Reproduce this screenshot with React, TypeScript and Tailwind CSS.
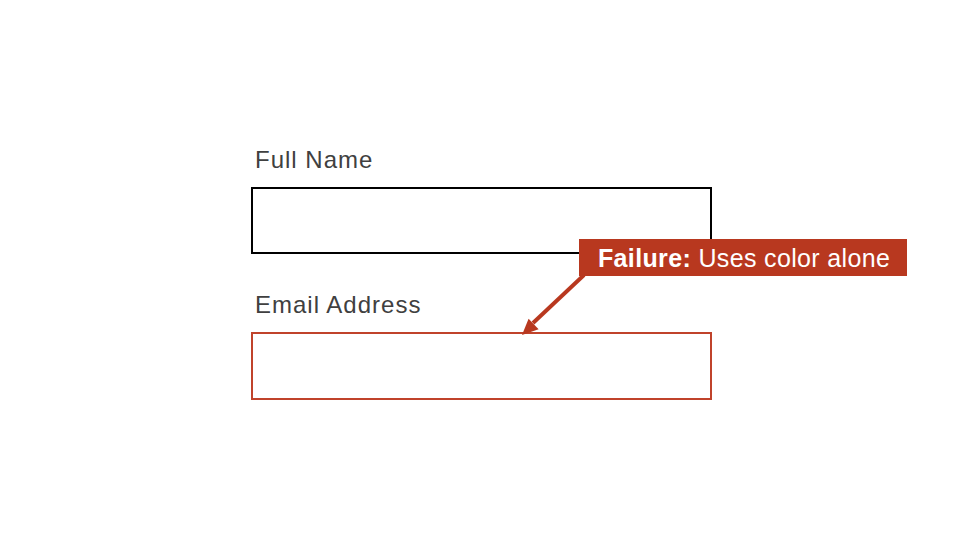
import React from "react";

export default function App() {
  const font = { fontFamily: '"Liberation Sans", Arial, sans-serif' };
  return (
    <div className="relative w-[960px] h-[540px] bg-white overflow-hidden" style={font}>
      <div className="flex flex-col pl-[251px] pt-[146px]">
        <div className="ml-[4px] text-[24px] leading-[28px] tracking-[1px] text-[#404040]">Full Name</div>
        <div className="mt-[13px] w-[461px] h-[67px] border-2 border-black bg-white" />
        <div className="mt-[37px] ml-[4px] text-[24px] leading-[28px] tracking-[1px] text-[#404040]">Email Address</div>
        <div className="mt-[13px] w-[461px] h-[68px] border-2 border-[#c0432b] bg-white" />
      </div>

      <svg className="absolute left-0 top-0" width="960" height="540" viewBox="0 0 960 540">
        <line x1="584" y1="275" x2="533" y2="323" stroke="#b8381f" strokeWidth="4" />
        <polygon points="522,335 538.6,329.3 528.6,318.7" fill="#b8381f" />
      </svg>

      <div className="absolute left-[579px] top-[239px] w-[328px] h-[37px] bg-[#b8381f] flex items-center pl-[19px] text-white text-[25px] leading-[30px] tracking-[0.35px]">
        <span className="font-bold">Failure:</span>
        <span>&nbsp;Uses color alone</span>
      </div>
    </div>
  );
}
